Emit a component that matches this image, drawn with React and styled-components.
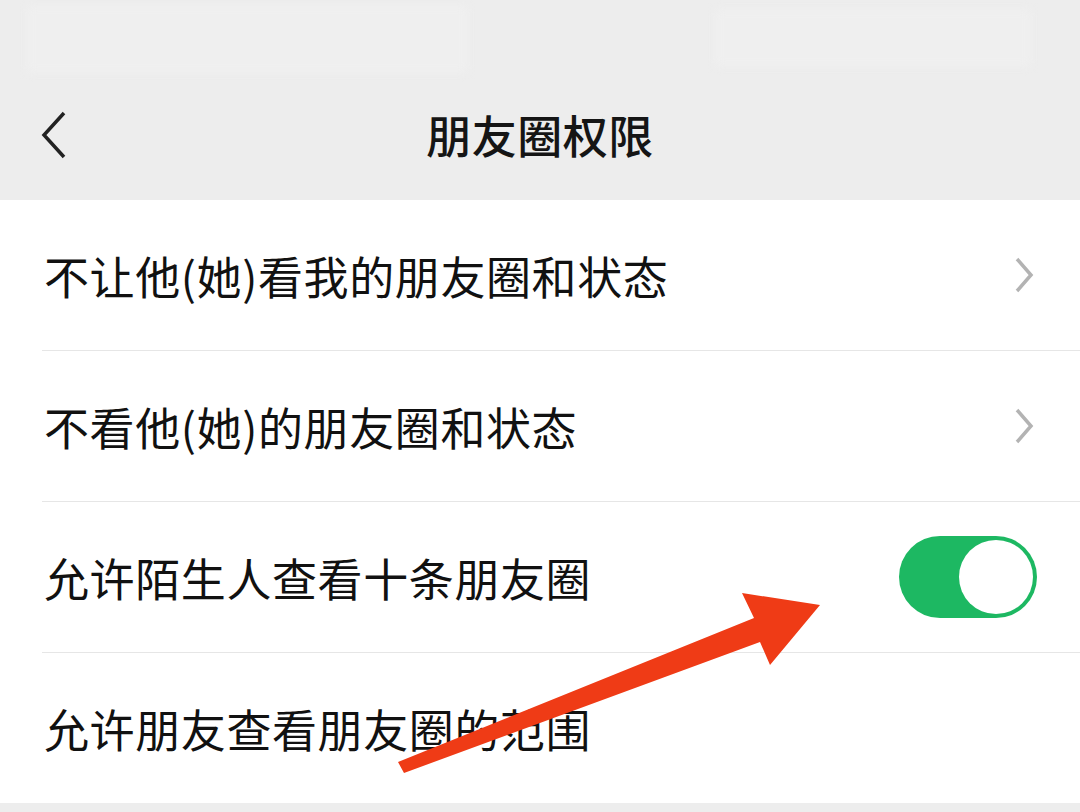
import React from 'react';
import styled, { createGlobalStyle } from 'styled-components';

const Global = createGlobalStyle`
  html, body { margin: 0; padding: 0; background: #ededed; }
  body { font-family: "Noto Sans CJK SC", "Noto Sans", sans-serif; }
`;

const Page = styled.div`
  width: 1080px;
  height: 812px;
  position: relative;
  overflow: hidden;
  background: #ededed;
`;

const StatusBar = styled.div`
  height: 70px;
  display: flex;
  justify-content: space-between;
  padding: 6px 0 0 28px;
  box-sizing: border-box;
`;

const Blur = styled.div`
  width: ${p => p.w}px;
  height: ${p => p.h}px;
  margin-right: ${p => p.mr || 0}px;
  margin-top: ${p => p.mt || 0}px;
  background: #efefef;
  border: 2px solid #f1f1f1;
  filter: blur(4px);
`;

const NavBar = styled.div`
  height: 128px;
  display: flex;
  align-items: center;
  justify-content: center;
  position: relative;
`;

const Back = styled.svg`
  position: absolute;
  left: 38px;
  top: 40px;
`;

const Title = styled.h1`
  margin: 0;
  font-size: 45px;
  font-weight: 500;
  color: #151515;
  letter-spacing: 0.5px;
`;

const List = styled.div`
  background: #fff;
  margin-top: 2px;
`;

const Row = styled.div`
  height: 150px;
  display: flex;
  align-items: center;
  justify-content: space-between;
  margin-left: 42px;
  padding-right: 44px;
  border-bottom: ${p => (p.last ? 'none' : '1px solid #e6e6e6')};
`;

const Label = styled.span`
  font-size: 45px;
  color: #111;
  letter-spacing: 0.6px;
  padding-left: 2px;
`;

const Toggle = styled.div`
  width: 138px;
  height: 82px;
  border-radius: 41px;
  background: #1db862;
  display: flex;
  align-items: center;
  justify-content: flex-end;
  padding: 4px;
  box-sizing: border-box;
  margin-right: -1px;
`;

const Knob = styled.div`
  width: 74px;
  height: 74px;
  border-radius: 50%;
  background: #fff;
`;

const Arrow = styled.svg`
  position: absolute;
  left: 0;
  top: 0;
  pointer-events: none;
`;

const Chevron = () => (
  <svg width="24" height="40" viewBox="0 0 24 40">
    <path d="M5 4 L19 20 L5 36" fill="none" stroke="#b3b3b3" strokeWidth="3.5" />
  </svg>
);

export default function App() {
  return (
    <Page>
      <Global />
      <StatusBar>
        <Blur w={435} h={62} />
        <Blur w={310} h={52} mr={50} mt={4} />
      </StatusBar>
      <NavBar>
        <Back width="32" height="50" viewBox="0 0 32 50">
          <path d="M26 3 L6 25 L26 47" fill="none" stroke="#222" strokeWidth="3.5" />
        </Back>
        <Title>朋友圈权限</Title>
      </NavBar>
      <List>
        <Row>
          <Label>不让他(她)看我的朋友圈和状态</Label>
          <Chevron />
        </Row>
        <Row>
          <Label>不看他(她)的朋友圈和状态</Label>
          <Chevron />
        </Row>
        <Row>
          <Label>允许陌生人查看十条朋友圈</Label>
          <Toggle><Knob /></Toggle>
        </Row>
        <Row last>
          <Label>允许朋友查看朋友圈的范围</Label>
        </Row>
      </List>
      <Arrow width="1080" height="812" viewBox="0 0 1080 812">
        <polygon
          points="398,762 754,618 742,593 820,605 770,665 760,642 404,773"
          fill="#ef3b16"
        />
      </Arrow>
    </Page>
  );
}
